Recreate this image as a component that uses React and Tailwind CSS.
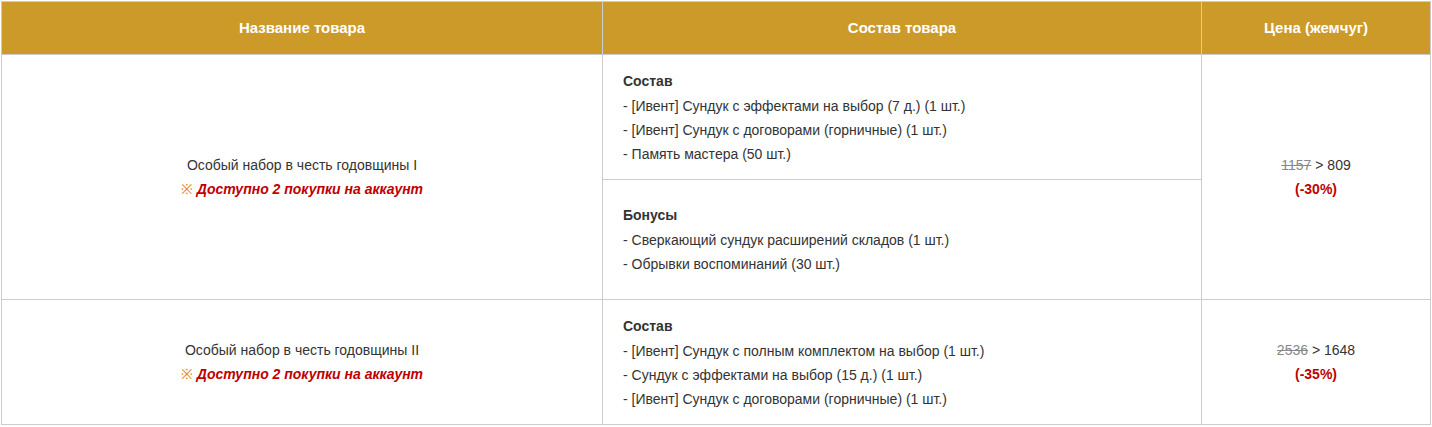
const cell = 'border border-[#cccccc] align-middle';

function Bundle({ title, items }) {
  return (
    <div className="text-left pl-[20px]">
      <div className="font-bold leading-[25px]">{title}</div>
      {items.map((it) => (
        <div key={it} className="leading-6">- {it}</div>
      ))}
    </div>
  );
}

function Name({ text }) {
  return (
    <div className="text-center">
      <div className="leading-6">{text}</div>
      <div className="leading-6 text-[#c00000] font-bold italic">
        <span className="font-normal not-italic text-[#e08a3a]">※</span> Доступно 2 покупки на аккаунт
      </div>
    </div>
  );
}

function Price({ old, now, pct }) {
  return (
    <div className="text-center">
      <div className="leading-6">
        <span className="line-through text-[#888888]">{old}</span> &gt; {now}
      </div>
      <div className="leading-6 font-bold text-[#c00000]">({pct})</div>
    </div>
  );
}

export default function App() {
  return (
    <div className="bg-white w-[1432px] h-[427px] pt-px pl-px font-['Liberation_Sans',Arial,sans-serif] text-[14px] text-[#333333]">
      <table className="border-collapse w-[1429px] table-fixed">
        <colgroup>
          <col className="w-[601px]" />
          <col className="w-[599px]" />
          <col className="w-[229px]" />
        </colgroup>
        <thead>
          <tr className="bg-[#cc9a28] text-white text-[15px]">
            <th className={`${cell} h-[53px] font-bold`}>Название товара</th>
            <th className={`${cell} h-[53px] font-bold`}>Состав товара</th>
            <th className={`${cell} h-[53px] font-bold`}>Цена (жемчуг)</th>
          </tr>
        </thead>
        <tbody>
          <tr>
            <td rowSpan={2} className={cell}>
              <Name text="Особый набор в честь годовщины I" />
            </td>
            <td className={`${cell} h-[125px]`}>
              <Bundle
                title="Состав"
                items={[
                  '[Ивент] Сундук с эффектами на выбор (7 д.) (1 шт.)',
                  '[Ивент] Сундук с договорами (горничные) (1 шт.)',
                  'Память мастера (50 шт.)',
                ]}
              />
            </td>
            <td rowSpan={2} className={cell}>
              <Price old="1157" now="809" pct="-30%" />
            </td>
          </tr>
          <tr>
            <td className={`${cell} h-[120px]`}>
              <Bundle
                title="Бонусы"
                items={[
                  'Сверкающий сундук расширений складов (1 шт.)',
                  'Обрывки воспоминаний (30 шт.)',
                ]}
              />
            </td>
          </tr>
          <tr>
            <td className={cell}>
              <Name text="Особый набор в честь годовщины II" />
            </td>
            <td className={`${cell} h-[125px]`}>
              <Bundle
                title="Состав"
                items={[
                  '[Ивент] Сундук с полным комплектом на выбор (1 шт.)',
                  'Сундук с эффектами на выбор (15 д.) (1 шт.)',
                  '[Ивент] Сундук с договорами (горничные) (1 шт.)',
                ]}
              />
            </td>
            <td className={cell}>
              <Price old="2536" now="1648" pct="-35%" />
            </td>
          </tr>
        </tbody>
      </table>
    </div>
  );
}
